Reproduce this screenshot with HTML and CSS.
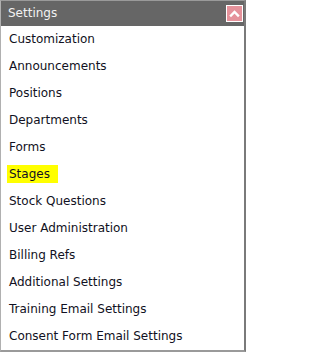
FILE: index.html
```html
<!DOCTYPE html>
<html>
<head>
<meta charset="utf-8">
<link rel="stylesheet" href="styles.css">
</head>
<body>
<div class="panel">
  <div class="panel-header">
    <span class="panel-title">Settings</span>
    <span class="collapse-btn">
      <svg width="15" height="15" viewBox="0 0 15 15"><path d="M4 9.5 L7.5 6 L11 9.5" fill="none" stroke="#fff" stroke-width="2.4" stroke-linecap="square"/></svg>
    </span>
  </div>
  <ul class="menu">
    <li><a class="link">Customization</a></li>
    <li><a class="link">Announcements</a></li>
    <li><a class="link">Positions</a></li>
    <li><a class="link">Departments</a></li>
    <li><a class="link">Forms</a></li>
    <li><a class="link active">Stages</a></li>
    <li><a class="link">Stock Questions</a></li>
    <li><a class="link">User Administration</a></li>
    <li><a class="link">Billing Refs</a></li>
    <li><a class="link">Additional Settings</a></li>
    <li><a class="link">Training Email Settings</a></li>
    <li><a class="link">Consent Form Email Settings</a></li>
  </ul>
</div>
</body>
</html>
```
FILE: styles.css
```css
html, body {
  margin: 0;
  padding: 0;
  background: #fff;
}
body {
  font-family: "DejaVu Sans", Verdana, sans-serif;
  font-size: 12px;
}
.panel {
  width: 243px;
  border-top: 1px solid #9a9a9a;
  border-left: 1px solid #b0b0b0;
  border-right: 2px solid #7a7a7a;
  border-bottom: 2px solid #9a9a9a;
  box-shadow: 0 2px 0 #555;
}
.panel-header {
  height: 25px;
  background: #666666;
  display: flex;
  align-items: center;
  justify-content: space-between;
  padding: 0 1px 0 7px;
}
.panel-title {
  color: #f2f2f2;
  line-height: 14px;
  margin-top: -1px;
}
.collapse-btn {
  width: 15px;
  height: 15px;
  border: 1px solid #fff;
  background: #e5929b;
  display: flex;
  align-items: center;
  justify-content: center;
}
.menu {
  list-style: none;
  margin: 0;
  padding: 0;
}
.menu li {
  height: 27px;
  line-height: 27px;
  padding-left: 6px;
}
.link {
  color: #111122;
  padding: 2px 8px 2px 2px;
}
.link.active {
  background: #ffff00;
}
```
